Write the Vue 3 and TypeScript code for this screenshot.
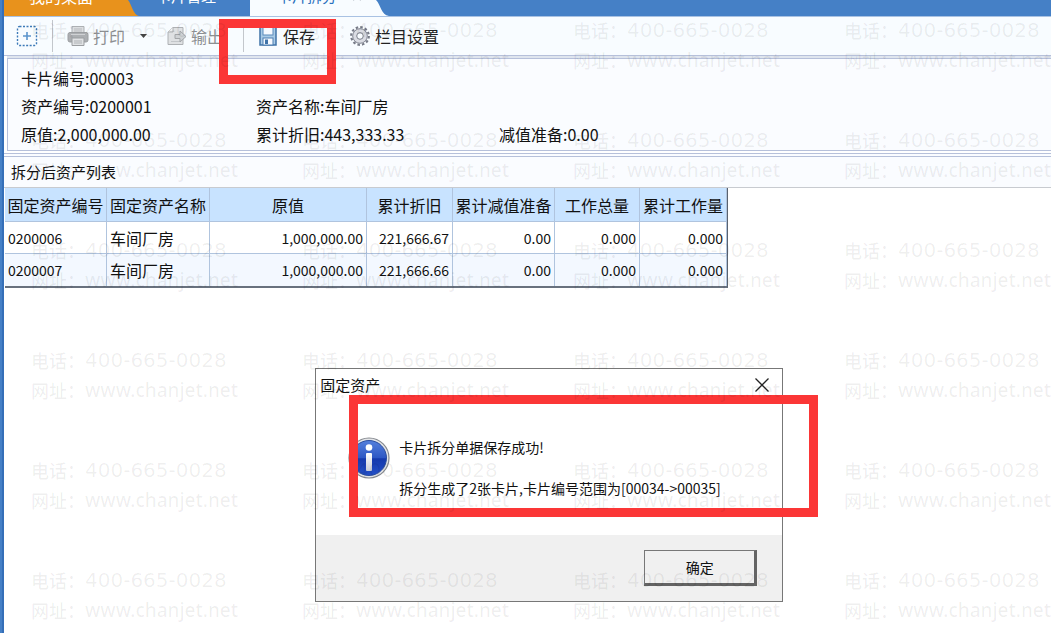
<script setup lang="ts">
import { ref } from 'vue'

interface Asset {
  code: string
  name: string
  original: string
  depreciation: string
  impairment: string
  workload: string
  totalWorkload: string
}

const columns: string[] = ['固定资产编号', '固定资产名称', '原值', '累计折旧', '累计减值准备', '工作总量', '累计工作量']

const assets: Asset[] = [
  { code: '0200006', name: '车间厂房', original: '1,000,000.00', depreciation: '221,666.67', impairment: '0.00', workload: '0.000', totalWorkload: '0.000' },
  { code: '0200007', name: '车间厂房', original: '1,000,000.00', depreciation: '221,666.66', impairment: '0.00', workload: '0.000', totalWorkload: '0.000' },
]

const stampCount = 24
const dialogOpen = ref(true)
</script>

<template>
  <div class="window">
    <nav class="tabs">
      <button class="tab home" type="button">我的桌面</button>
      <svg class="curve" width="12" height="16" viewBox="0 0 12 16"><path d="M0 0H1C5 5 6 15 12 16H0Z" fill="#e8921c" /></svg>
      <button class="tab manage" type="button">卡片管理</button>
      <button class="tab current" type="button">卡片拆分<svg class="tab-close" width="10" height="10" viewBox="0 0 10 10"><path d="M1 1L9 9M9 1L1 9" stroke="#a9b1bb" stroke-width="2" /></svg></button>
      <svg class="curve" width="14" height="16" viewBox="0 0 14 16"><path d="M0 0H1C6 5 6 15 14 16H0Z" fill="#f8fcff" /></svg>
    </nav>

    <div class="toolbar">
      <button class="tool add" type="button" aria-label="新增">
        <svg width="22" height="22" viewBox="0 0 22 22">
          <rect x="1.5" y="1.5" width="19" height="19" rx="2" fill="none" stroke="#3d7ab8" stroke-width="1.4" stroke-dasharray="2 1.5" />
          <path d="M11 7V15M7 11H15" stroke="#5c94cc" stroke-width="1.6" />
        </svg>
      </button>
      <i class="divider"></i>
      <button class="tool print muted" type="button">
        <svg width="22" height="22" viewBox="0 0 22 22">
          <path d="M5 9V1.500H17V9" fill="#dcdee0" stroke="#adb0b3" />
          <path d="M7 4H15M7 6H15" stroke="#b9bbbe" />
          <rect x="1" y="7.500" width="20" height="9.500" rx="2" fill="#acafb2" stroke="#9b9ea1" />
          <path d="M4 9.500H18" stroke="#d0d2d4" />
          <path d="M5 13H17V20.500H5Z" fill="#e0e2e4" stroke="#9b9ea1" />
          <path d="M7 16H15M7 18H15" stroke="#b0b3b6" />
        </svg>
        打印
      </button>
      <button class="tool more" type="button" aria-label="打印选项">
        <svg width="7" height="5" viewBox="0 0 7 5"><path d="M0 0H7L3.500 4Z" fill="#444" /></svg>
      </button>
      <button class="tool export muted" type="button">
        <svg width="20" height="20" viewBox="0 0 20 20">
          <path d="M1 6L6 1.500H16V18.500H1Z" fill="#dfe1e3" stroke="#aeb1b4" />
          <path d="M1 6H6V1.500" fill="#f4f5f6" stroke="#aeb1b4" />
          <path d="M4 15.500H13" stroke="#c3c6c9" />
          <path d="M8 8.500H13V5L19 10.500L13 16V12.500H8Z" fill="#cfd2d5" stroke="#a3a6a9" />
        </svg>
        输出
      </button>
      <i class="divider"></i>
      <div class="save-wrap">
        <button class="tool" type="button">
          <svg width="18" height="20" viewBox="0 0 18 20">
            <path d="M1 1H17V19H1Z" fill="#a9cbe6" stroke="#3f73a8" stroke-width="1.500" />
            <rect x="4" y="0" width="10" height="9" fill="#f6faff" stroke="#5b8bbb" />
            <rect x="4" y="12" width="10" height="7" fill="#f6faff" stroke="#4c7eb1" />
            <rect x="6" y="13.500" width="3" height="4.500" fill="#3f73a8" />
          </svg>
          保存
        </button>
        <span class="mark save-mark"></span>
      </div>
      <button class="tool settings" type="button">
        <svg width="20" height="20" viewBox="0 0 20 20">
          <circle cx="10" cy="10" r="8.800" fill="none" stroke="#777b87" stroke-width="2.200" stroke-dasharray="2.500 2.107" />
          <circle cx="10" cy="10" r="5.500" fill="none" stroke="#dadce3" stroke-width="4" />
          <circle cx="10" cy="10" r="7.300" fill="none" stroke="#858995" />
          <circle cx="10" cy="10" r="3.300" fill="#f8fcff" stroke="#777b87" />
        </svg>
        栏目设置
      </button>
    </div>

    <section class="card">
      <span class="wide">卡片编号:00003</span>
      <span>资产编号:0200001</span>
      <span class="two">资产名称:车间厂房</span>
      <span>原值:2,000,000.00</span>
      <span>累计折旧:443,333.33</span>
      <span>减值准备:0.00</span>
    </section>

    <h2 class="list-title">拆分后资产列表</h2>

    <table class="assets" aria-label="拆分后资产列表">
      <colgroup>
        <col class="c-code" /><col class="c-name" /><col class="c-original" /><col class="c-dep" />
        <col class="c-imp" /><col class="c-work" /><col class="c-total" />
      </colgroup>
      <thead>
        <tr><th v-for="column in columns" :key="column" scope="col">{{ column }}</th></tr>
      </thead>
      <tbody>
        <tr v-for="asset in assets" :key="asset.code">
          <td>{{ asset.code }}</td>
          <td class="name">{{ asset.name }}</td>
          <td class="num">{{ asset.original }}</td>
          <td class="num">{{ asset.depreciation }}</td>
          <td class="num">{{ asset.impairment }}</td>
          <td class="num">{{ asset.workload }}</td>
          <td class="num">{{ asset.totalWorkload }}</td>
        </tr>
      </tbody>
    </table>

    <div v-if="dialogOpen" class="dialog" role="dialog" aria-labelledby="dialog-title">
      <header class="dialog-head">
        <span id="dialog-title">固定资产</span>
        <button class="close" type="button" aria-label="关闭" @click="dialogOpen = false">
          <svg width="14" height="14" viewBox="0 0 14 14"><path d="M0.500 0.500L13.500 13.500M13.500 0.500L0.500 13.500" stroke="#222" stroke-width="1.300" /></svg>
        </button>
      </header>
      <div class="dialog-body">
        <svg class="info" width="42" height="42" viewBox="0 0 42 42">
          <defs>
            <linearGradient id="ball" x1="0" y1="0" x2="0" y2="1">
              <stop offset="0" stop-color="#5580dc" />
              <stop offset="0.500" stop-color="#2d57c4" />
              <stop offset="0.520" stop-color="#1539ac" />
              <stop offset="1" stop-color="#2450c8" />
            </linearGradient>
            <linearGradient id="stem" x1="0" y1="0" x2="0" y2="1">
              <stop offset="0" stop-color="#fff" />
              <stop offset="1" stop-color="#c9cdd8" />
            </linearGradient>
          </defs>
          <circle cx="21" cy="21" r="20" fill="#e3e5e8" stroke="#85898f" stroke-width="1.200" />
          <circle cx="21" cy="21" r="17.500" fill="url(#ball)" stroke="#2a4d9f" />
          <circle cx="21" cy="10.500" r="3.300" fill="#fff" />
          <rect x="18" y="16" width="6" height="18" rx="1" fill="url(#stem)" />
        </svg>
        <div class="message">
          <p>卡片拆分单据保存成功!</p>
          <p>拆分生成了2张卡片,卡片编号范围为[00034-&gt;00035]</p>
        </div>
      </div>
      <footer class="dialog-foot">
        <button class="ok" type="button" @click="dialogOpen = false">确定</button>
      </footer>
      <span class="mark dialog-mark"></span>
    </div>

    <div class="stamps" aria-hidden="true">
      <div v-for="n in stampCount" :key="n" class="stamp">
        <div class="line">电话：<span class="phone">400-665-0028</span></div>
        <div class="line">网址：<span class="site">www.chanjet.net</span></div>
      </div>
    </div>
  </div>
</template>

<style>
body {
  margin: 0;
}
</style>

<style scoped>
.window {
  position: relative;
  box-sizing: border-box;
  min-height: 100vh;
  overflow: hidden;
  padding-left: 4px;
  background: linear-gradient(90deg, #4580c6 0 2px, #356fb8 2px 4px, #fff 4px);
  color: #111;
  font: 16px/20px "Noto Sans CJK SC", sans-serif;
}
button {
  margin: 0;
  padding: 0;
  border: 0;
  background: none;
  color: inherit;
  font: inherit;
}
svg {
  display: block;
  flex: none;
}
.tabs {
  display: flex;
  height: 16px;
  overflow: hidden;
  background: #4580c6;
  border-bottom: 1px solid #a9c2e3;
}
.tab {
  display: flex;
  align-items: center;
  box-sizing: border-box;
  height: 30px;
  margin-top: -14px;
  padding-bottom: 10px;
  color: #fff;
}
.home {
  width: 123px;
  padding-left: 25px;
  background: #e8921c;
}
.manage {
  width: 111px;
  padding-left: 17px;
  font-size: 15px;
}
.current {
  width: 125px;
  padding-left: 27px;
  background: #f8fcff;
  color: #2a70bd;
  font-size: 15px;
}
.tab-close {
  margin-left: 15px;
}
.toolbar {
  display: flex;
  align-items: center;
  height: 38px;
  background: #f8fcff;
  border-bottom: 1px solid #b6c0da;
  color: #222;
}
.tool {
  display: flex;
  align-items: center;
  gap: 5px;
  height: 28px;
  white-space: nowrap;
}
.muted {
  color: #8d8f92;
}
.add {
  margin: 0 14px 0 12px;
}
.divider {
  width: 1px;
  height: 32px;
  background: #c3c7cc;
}
.print {
  margin-left: 14px;
  gap: 4px;
}
.more {
  margin: 0 20px 0 15px;
}
.export {
  margin-right: 20px;
  gap: 4px;
}
.save-wrap {
  position: relative;
  margin-left: 15px;
}
.settings {
  margin-left: 35px;
}
.save-wrap .tool {
  gap: 6px;
}
.mark {
  position: absolute;
  box-sizing: border-box;
  border: 9px solid #fb3636;
  pointer-events: none;
}
.save-mark {
  left: -40px;
  top: -3px;
  width: 117px;
  height: 65px;
}
.card {
  display: grid;
  grid-template-columns: 235px 243px 1fr;
  margin: 2px 0 0 3px;
  padding: 5px 0 2px 13px;
  background: #fafcff;
  border: 1px solid #b6c0da;
  border-right: 0;
  line-height: 28px;
  box-shadow: 0 -2px #dfe5ee;
}
.card .wide {
  grid-column: 1 / -1;
}
.card .two {
  grid-column: 2 / -1;
}
.list-title {
  margin: 2px 0 0;
  padding: 0 0 0 7px;
  border-top: 4px double #b6c0da;
  border-bottom: 1px solid #c8cbd0;
  background: #fafcff;
  font-size: 15px;
  font-weight: 400;
  line-height: 30px;
}
.assets {
  table-layout: fixed;
  width: 723px;
  margin-left: 1px;
  border-collapse: separate;
  border-spacing: 0;
  border-right: 1px solid #59626f;
  border-bottom: 2px solid #68717e;
}
.c-code, .c-imp {
  width: 102px;
}
.c-name {
  width: 103px;
}
.c-original {
  width: 157px;
}
.c-dep {
  width: 86px;
}
.c-work {
  width: 85px;
}
.assets th,
.assets td {
  box-sizing: border-box;
  border-right: 1px solid #b0c4de;
  border-bottom: 1px solid #b0c4de;
  white-space: nowrap;
}
.assets tbody tr:last-child td {
  border-bottom: 0;
}
.assets th {
  height: 34px;
  padding: 0;
  background: #c8e3ff;
  font-weight: 400;
}
.assets td {
  height: 32px;
  padding: 0 3px;
  text-align: left;
  font-size: 14px;
}
.assets td.num {
  text-align: right;
}
.assets td.name {
  font-size: 16px;
}
.assets tbody tr:nth-child(2) {
  background: #f3f8ff;
}
.dialog {
  position: absolute;
  left: 30%;
  top: 368px;
  width: 466px;
  background: #fff;
  border: 1px solid #777;
}
.dialog-head {
  display: flex;
  align-items: center;
  justify-content: space-between;
  height: 31px;
  padding: 0 13px 0 4px;
  font-size: 15px;
}
.dialog-body {
  display: flex;
  align-items: flex-start;
  gap: 9px;
  height: 98px;
  padding: 37px 0 0 32px;
}
.message {
  display: grid;
  gap: 21px;
  font-size: 14px;
}
.message p {
  margin: 0;
}
.dialog-foot {
  display: flex;
  justify-content: flex-end;
  padding: 15px 25px;
  background: #f0f0f0;
}
.ok {
  box-sizing: border-box;
  width: 113px;
  height: 36px;
  border: 1px solid #777;
  border-right: 3px solid #646464;
  border-bottom: 3px solid #646464;
  font-size: 14px;
}
.dialog-mark {
  left: 33px;
  top: 26px;
  width: 469px;
  height: 122px;
}
.stamps {
  position: absolute;
  inset: 0;
  overflow: hidden;
  display: grid;
  grid-template-columns: repeat(4, 271px);
  grid-auto-rows: 110px;
  padding: 15px 0 0 31px;
  color: rgba(0, 0, 0, 0.065);
  font-weight: 500;
  pointer-events: none;
}
.line {
  display: flex;
  height: 30px;
  align-items: center;
  font-size: 18px;
  white-space: nowrap;
}
.phone {
  font-family: "DejaVu Sans", sans-serif;
  font-size: 20px;
}
.site {
  font-family: "Noto Sans", sans-serif;
  font-size: 19px;
}
</style>
